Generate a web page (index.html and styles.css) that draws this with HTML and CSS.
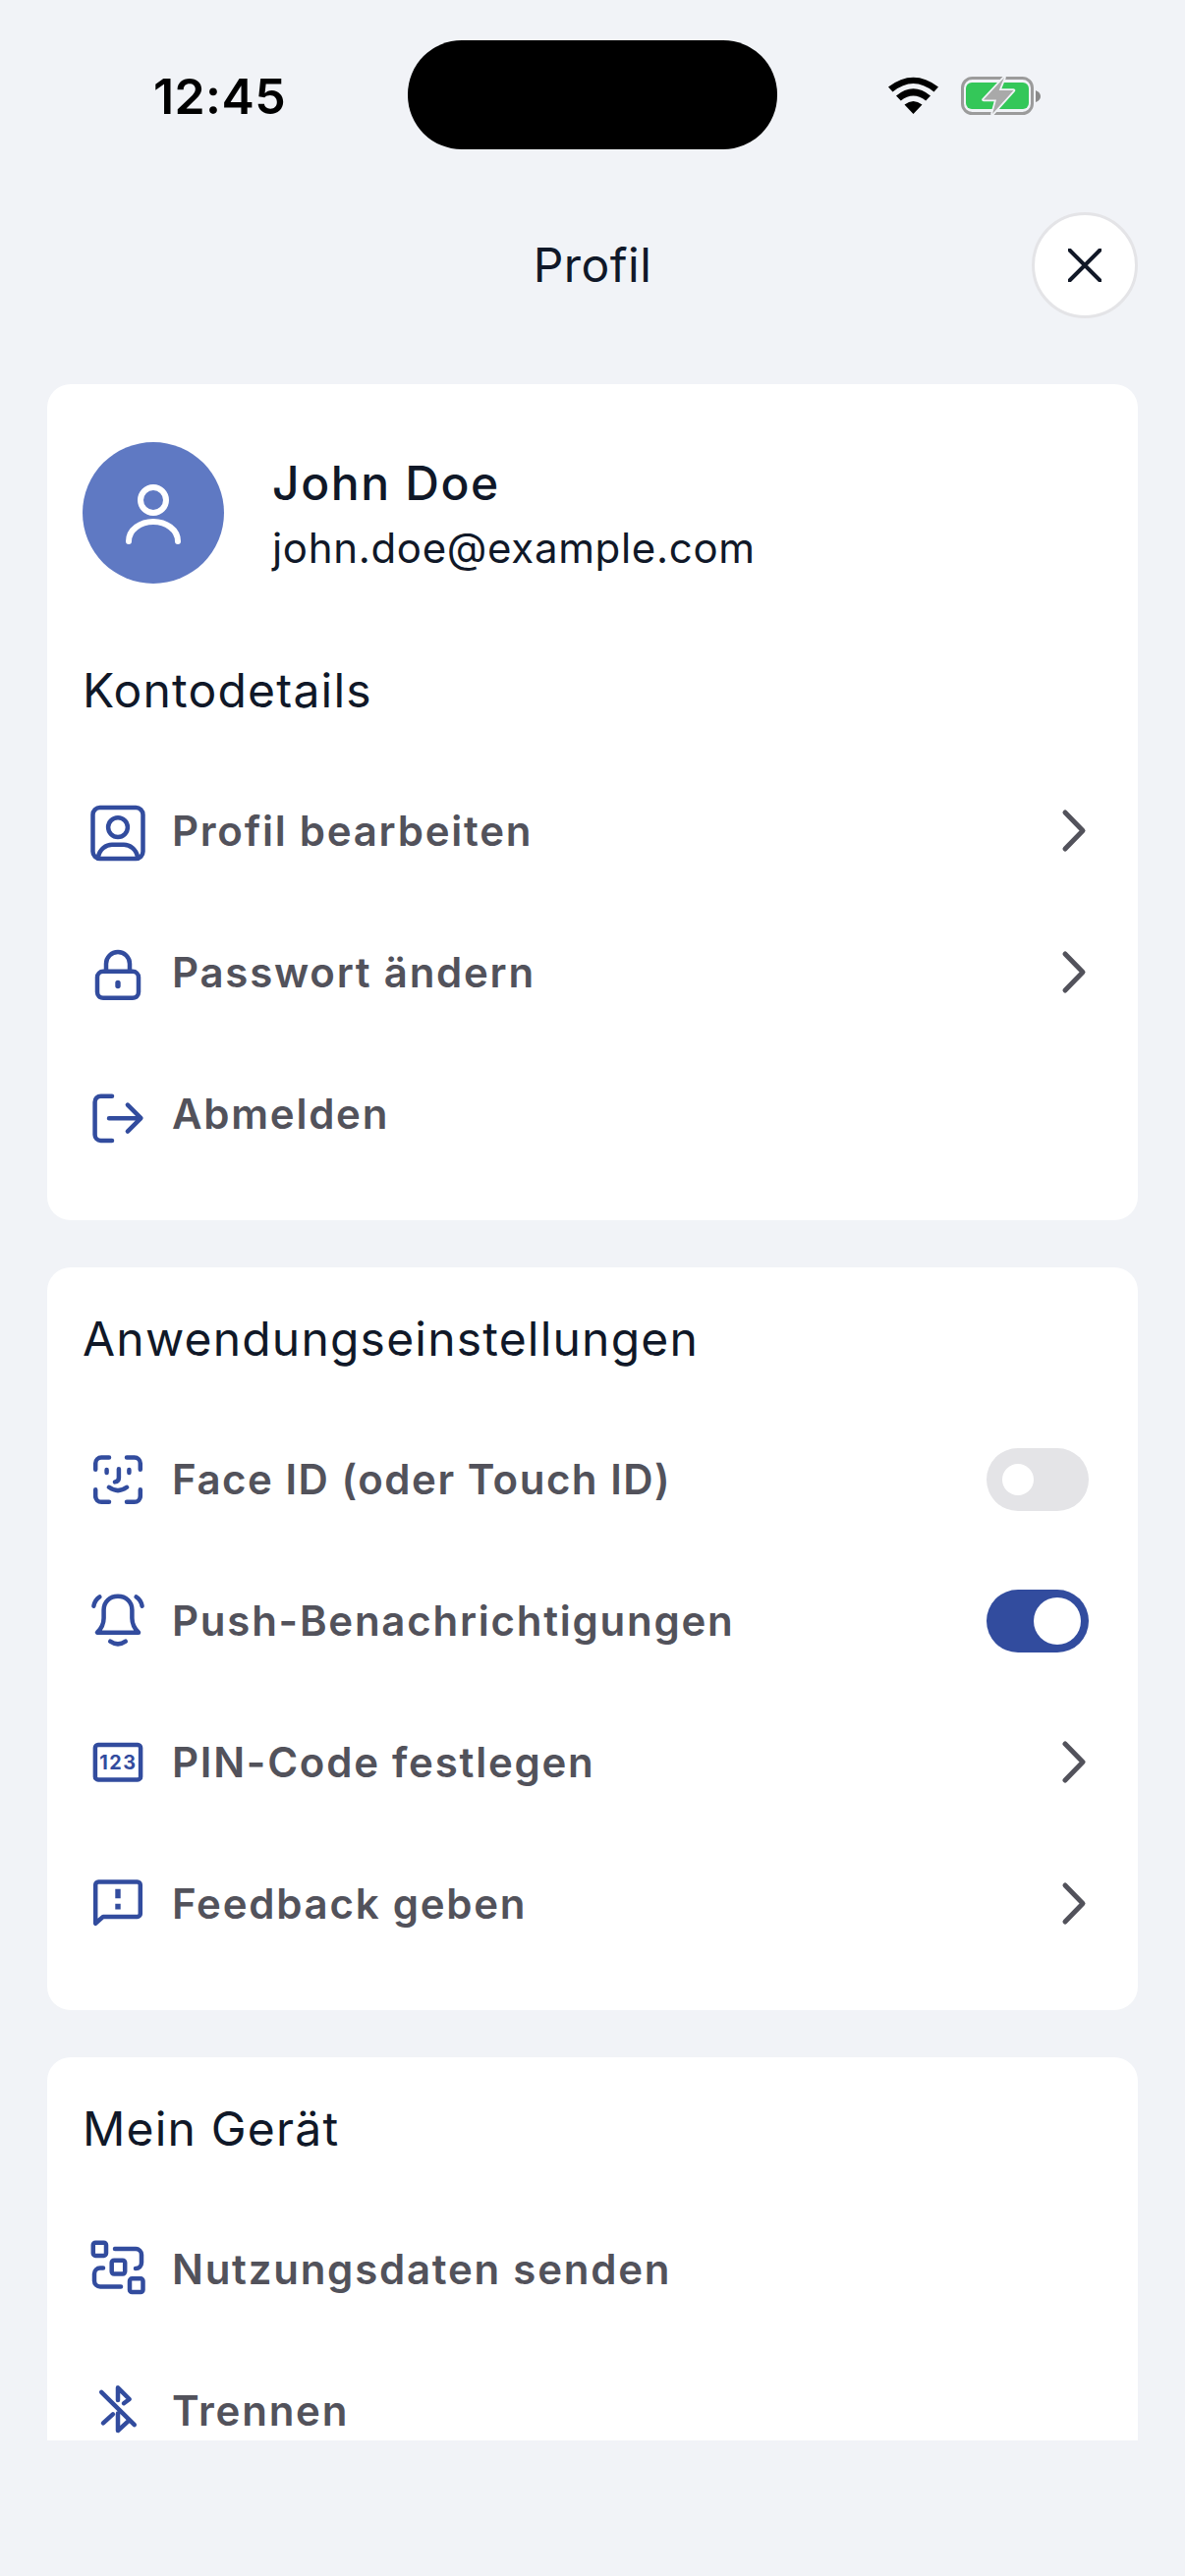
FILE: index.html
```html
<!DOCTYPE html>
<html lang="de">
<head>
<meta charset="utf-8">
<title>Profil</title>
<link rel="stylesheet" href="styles.css">
</head>
<body>
<div class="screen">
  <div class="status">
    <span class="time">12:45</span>
    <div class="island"></div>
    <svg class="status-icons" viewBox="0 0 156 40" width="156" height="40">
      <g transform="translate(0,1)">
        <path d="M25.5 37 L16.5 27.5 Q25.5 20.5 34.5 27.5Z M12.8 23.5 L8 18.5 Q25.5 4 43 18.5 L38.2 23.5 Q25.5 13.5 12.8 23.5Z M4.5 14.5 L0 9.5 Q25.5 -10 51 9.5 L46.5 14.5 Q25.5 -2.5 4.5 14.5Z" fill="#000"/>
      </g>
      <rect x="75.5" y="1.5" width="71" height="36" rx="10" fill="none" stroke="#9b9b9b" stroke-width="3"/>
      <rect x="79" y="6" width="64" height="27" rx="6" fill="#34c759"/>
      <path d="M150 14 Q155 16 155 20 Q155 24 150 26Z" fill="#8a8a8a"/>
      <path d="M118 1 L97 23.5 H110 L106 38 L127.5 14 H112.7Z" fill="#a9a9a9" stroke="#f1f3f7" stroke-width="3.5" stroke-linejoin="round" paint-order="stroke"/>
    </svg>
  </div>

  <header class="topbar">
    <h1 class="page-title">Profil</h1>
    <button class="close" type="button" aria-label="Schließen">
      <svg viewBox="0 0 34 34" width="34" height="34"><path d="M1.5 1.5 L32.5 32.5 M32.5 1.5 L1.5 32.5" fill="none" stroke="#111827" stroke-width="4" stroke-linecap="round"/></svg>
    </button>
  </header>

  <main class="scroll">
    <section class="card card-first">
      <div class="user">
        <div class="avatar">
          <svg viewBox="0 0 144 144" width="144" height="144" fill="none" stroke="#fff" stroke-width="6" stroke-linecap="round"><circle cx="72" cy="59" r="13"/><path d="M47 101 C47 89 59 81 72 81 C85 81 97 89 97 101"/></svg>
        </div>
        <div class="user-text">
          <div class="user-name">John Doe</div>
          <div class="user-mail">john.doe@example.com</div>
        </div>
      </div>
      <h2 class="section-title section-title-spaced">Kontodetails</h2>
      <ul class="rows">
        <li class="row">
          <svg class="icon" viewBox="0 0 24 24"><rect x="3.5" y="4" width="17" height="17.3" rx="2.4"/><circle cx="12" cy="10.7" r="3.3"/><path d="M5.3 20.8 C5.8 18 8 16.6 10 16.6 H14 C16 16.6 18.2 18 18.7 20.8"/></svg>
          <span class="label">Profil bearbeiten</span>
          <svg class="chev" viewBox="0 0 48 48"><path d="M15 5 L33 23.5 L15 42"/></svg>
        </li>
        <li class="row">
          <svg class="icon" viewBox="0 0 24 24"><rect x="5" y="11.6" width="14" height="9" rx="2"/><path d="M8 11.6 V9 a4 4 0 0 1 8 0 V11.6"/><path class="thick" d="M12 15.5 V16.5"/></svg>
          <span class="label">Passwort ändern</span>
          <svg class="chev" viewBox="0 0 48 48"><path d="M15 5 L33 23.5 L15 42"/></svg>
        </li>
        <li class="row">
          <svg class="icon" viewBox="0 0 24 24"><path d="M10 5.9 H6.2 a2 2 0 0 0 -2 2 V19 a2 2 0 0 0 2 2 H10"/><path d="M9 13.4 H19.6 M15.3 8.9 L19.8 13.4 L15.3 17.9"/></svg>
          <span class="label">Abmelden</span>
        </li>
      </ul>
    </section>

    <section class="card">
      <h2 class="section-title">Anwendungseinstellungen</h2>
      <ul class="rows">
        <li class="row">
          <svg class="icon" viewBox="0 0 24 24"><path d="M9 4.5 H6.4 a2 2 0 0 0 -2 2 V8.6 M15 4.5 H17.6 a2 2 0 0 1 2 2 V8.6 M9 19.6 H6.4 a2 2 0 0 1 -2 -2 V15.4 M15 19.6 H17.6 a2 2 0 0 0 2 -2 V15.4 M8.2 8.7 V9.7 M15.8 8.7 V9.7 M12.3 8.4 V11.4 Q12.3 12.6 11 12.8 M9 14.6 Q12 16.8 15 14.6"/></svg>
          <span class="label label-tight">Face ID (oder Touch ID)</span>
          <span class="toggle"><span class="knob"></span></span>
        </li>
        <li class="row">
          <svg class="icon" viewBox="0 0 24 24"><path d="M5 15.9 H19 C17.6 14.5 16.8 13 16.8 11 V8.2 C16.8 5.4 14.7 3.6 12 3.6 C9.3 3.6 7.2 5.4 7.2 8.2 V11 C7.2 13 6.4 14.5 5 15.9Z"/><path d="M9.4 18.9 Q12 20.7 14.6 18.9 M5.8 3.8 Q4.2 4.8 3.8 6.9 M18.2 3.8 Q19.8 4.8 20.2 6.9"/></svg>
          <span class="label">Push-Benachrichtigungen</span>
          <span class="toggle toggle-on"><span class="knob"></span></span>
        </li>
        <li class="row">
          <svg class="icon" viewBox="0 0 24 24"><rect x="4.3" y="6" width="15.4" height="11.8" rx="1"/><text class="icon-digits" x="12.1" y="14.2" text-anchor="middle">123</text></svg>
          <span class="label">PIN-Code festlegen</span>
          <svg class="chev" viewBox="0 0 48 48"><path d="M15 5 L33 23.5 L15 42"/></svg>
        </li>
        <li class="row">
          <svg class="icon" viewBox="0 0 24 24"><path d="M4.4 18.6 V5.5 a1 1 0 0 1 1 -1 H18.6 a1 1 0 0 1 1 1 V15.3 a1 1 0 0 1 -1 1 H7 L4.4 18.6Z"/><path class="solid" d="M11.1 6.9 H12.9 V10.1 H11.1Z M11.1 11.9 H12.9 V13.8 H11.1Z"/></svg>
          <span class="label">Feedback geben</span>
          <svg class="chev" viewBox="0 0 48 48"><path d="M15 5 L33 23.5 L15 42"/></svg>
        </li>
      </ul>
    </section>

    <section class="card">
      <h2 class="section-title">Mein Gerät</h2>
      <ul class="rows">
        <li class="row">
          <svg class="icon" viewBox="0 0 24 24"><rect x="3.6" y="2.9" width="4.4" height="4.4" rx=".8"/><rect x="9.9" y="8.9" width="4.5" height="4.6" rx=".8"/><rect x="16" y="15.1" width="4.5" height="4.6" rx=".8"/><path d="M11 5 H18 a2 2 0 0 1 2 2 V9.7 a2 2 0 0 1 -2 2 M7 11.5 H6 a2 2 0 0 0 -2 2 V15.8 a2 2 0 0 0 2 2 H13"/></svg>
          <span class="label">Nutzungsdaten senden</span>
        </li>
        <li class="row">
          <svg class="icon" viewBox="0 0 24 24"><path d="M6.4 5.6 L17.6 16.7 M12 8.3 V4.1 L15.9 8 L14 9.4 M7 16.1 L10.3 13.1 M12 12.8 V18.7 L15.6 15.4"/></svg>
          <span class="label">Trennen</span>
        </li>
      </ul>
    </section>
  </main>
</div>
</body>
</html>
```

FILE: styles.css
```css
* { box-sizing: border-box; }
html, body { margin: 0; padding: 0; }
body {
  background: #f1f3f7;
  font-family: Inter, "Liberation Sans", sans-serif;
  color: #101828;
}
.screen { width: 1206px; height: 2622px; overflow: hidden; }
.status {
  position: relative;
  height: 196px;
  display: flex;
  align-items: flex-start;
  justify-content: space-between;
  padding: 68px 0 0 156px;
}
.time {
  font-size: 50px;
  line-height: 60px;
  font-weight: 600;
  letter-spacing: .4px;
  color: #000;
}
.island {
  position: absolute;
  left: 415px;
  top: 41px;
  width: 376px;
  height: 111px;
  border-radius: 55px;
  background: #000;
}
.status-icons { margin: 10px 146px 0 0; display: block; }
.topbar {
  height: 195px;
  display: flex;
  align-items: flex-start;
  justify-content: center;
  position: relative;
  padding-top: 20px;
}
.page-title {
  margin: 0;
  font-size: 48px;
  line-height: 108px;
  font-weight: 400;
  letter-spacing: .5px;
}
.close {
  position: absolute;
  right: 48px;
  top: 20px;
  width: 108px;
  height: 108px;
  padding: 0;
  border-radius: 50%;
  border: 3px solid #e4e4e7;
  background: #fff;
  display: flex;
  align-items: center;
  justify-content: center;
}
.scroll {
  height: 2093px;
  margin: 0 48px;
  overflow: hidden;
  display: flex;
  flex-direction: column;
  gap: 48px;
}
.card {
  flex: none;
  background: #fff;
  border-radius: 24px;
  padding: 37px 36px 36px;
}
.card-first { padding-top: 59px; }
.user { display: flex; align-items: center; gap: 49px; }
.avatar {
  width: 144px;
  height: 144px;
  border-radius: 50%;
  background: #5f79c3;
  flex: none;
}
.avatar svg { display: block; }
.user-text { padding-top: 5px; }
.user-name {
  font-size: 48px;
  line-height: 66px;
  font-weight: 500;
  letter-spacing: 1.6px;
}
.user-mail {
  font-size: 42px;
  line-height: 66px;
  letter-spacing: .67px;
}
.section-title {
  margin: 0 0 35px;
  font-size: 48px;
  line-height: 72px;
  font-weight: 400;
  letter-spacing: 1.2px;
}
.section-title-spaced { margin-top: 73px; }
.rows { list-style: none; margin: 0; padding: 0; }
.row {
  height: 144px;
  display: flex;
  align-items: center;
}
.icon {
  width: 72px;
  height: 72px;
  flex: none;
  fill: none;
  stroke: #324c9e;
  stroke-width: 1.5;
  stroke-linecap: round;
  stroke-linejoin: round;
}
.icon .thick { stroke-width: 1.8; }
.icon .solid { fill: #324c9e; stroke: none; }
.icon-digits {
  font-family: Inter, "Liberation Sans", sans-serif;
  font-size: 6.6px;
  font-weight: 700;
  letter-spacing: .5px;
  fill: #324c9e;
  stroke: none;
}
.label {
  flex: 1;
  margin-left: 19px;
  padding-bottom: 2px;
  font-size: 42px;
  font-weight: 600;
  letter-spacing: 1.75px;
  color: #52525b;
}
.label-tight { letter-spacing: 1.5px; }
.chev {
  width: 48px;
  height: 48px;
  flex: none;
  margin-right: 5px;
  fill: none;
  stroke: #52525b;
  stroke-width: 5;
  stroke-linecap: round;
  stroke-linejoin: round;
}
.toggle {
  width: 104px;
  height: 64px;
  flex: none;
  margin-right: 14px;
  border-radius: 32px;
  background: #e4e4e7;
  display: flex;
  align-items: center;
  padding-left: 16px;
}
.knob {
  width: 32px;
  height: 32px;
  border-radius: 50%;
  background: #fff;
}
.toggle-on {
  background: #324c9e;
  padding-left: 48px;
}
.toggle-on .knob { width: 48px; height: 48px; }
```
